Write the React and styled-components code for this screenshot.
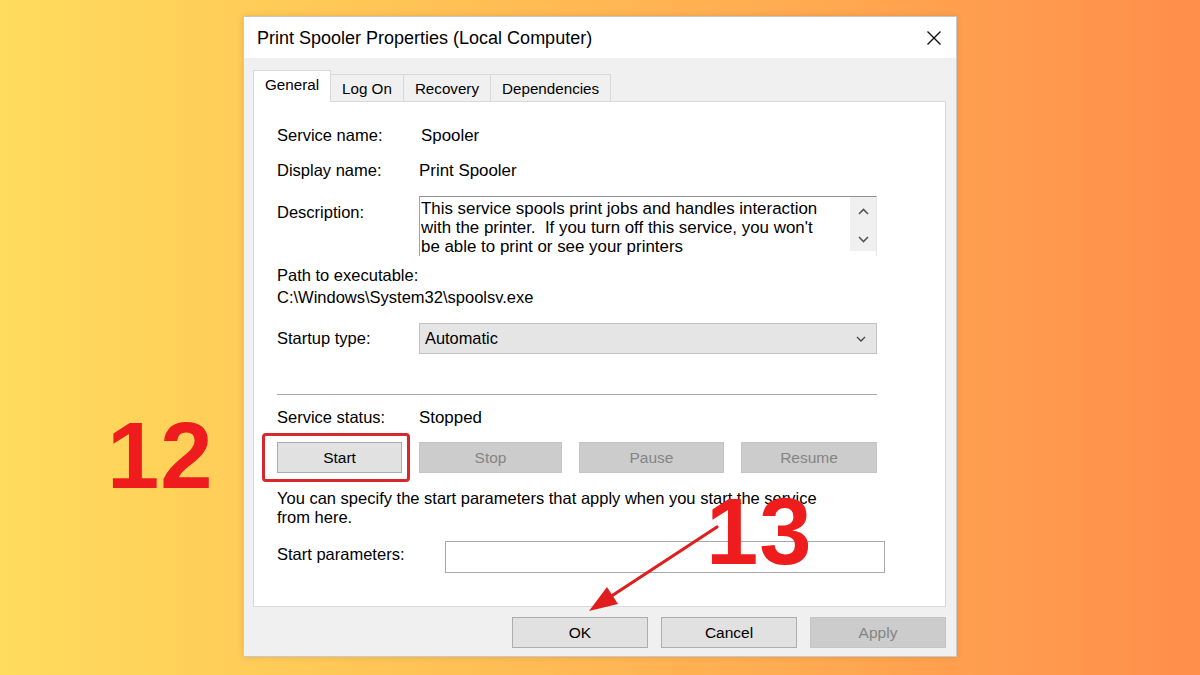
import React from 'react';
import styled, { createGlobalStyle, css } from 'styled-components';

const GlobalStyle = createGlobalStyle`
  html, body {
    margin: 0;
    padding: 0;
  }
  body {
    font-family: "Liberation Sans", Arial, sans-serif;
    color: #000;
  }
  * {
    box-sizing: border-box;
  }
`;

const Page = styled.div`
  position: relative;
  width: 1200px;
  height: 675px;
  overflow: hidden;
  padding-top: 16px;
  display: flex;
  justify-content: center;
  align-items: flex-start;
  background: linear-gradient(90deg, #ffdc5d 0%, #ffc656 30%, #ffae52 62%, #ff8e4b 100%);
`;

const Dialog = styled.div`
  width: 714px;
  height: 641px;
  display: flex;
  flex-direction: column;
  background: #f0f0f0;
  border: 1px solid #c9c9c9;
  box-shadow: 0 0 6px rgba(120, 70, 0, 0.18);
`;

const TitleBar = styled.div`
  height: 41px;
  flex: none;
  display: flex;
  align-items: center;
  justify-content: space-between;
  padding: 0 14px 0 13px;
  background: #fff;
`;

const Title = styled.span`
  font-size: 18px;
  padding-top: 2px;
`;

const Body = styled.div`
  flex: 1;
  display: flex;
  flex-direction: column;
  padding: 12px 10px 8px 9px;
`;

const TabStrip = styled.div`
  height: 31px;
  display: flex;
  align-items: flex-end;
`;

const Tab = styled.div`
  height: 27px;
  padding: 0 11px;
  display: flex;
  align-items: center;
  font-size: 15.2px;
  background: #f0f0f0;
  border: 1px solid #d9d9d9;
  border-bottom: none;
  margin-left: -1px;
  ${(p) =>
    p.$active &&
    css`
      position: relative;
      z-index: 1;
      height: 32px;
      margin: 0 0 -1px 0;
      padding: 0 11px 4px;
      background: #fff;
    `}
`;

const Panel = styled.div`
  height: 506px;
  display: flex;
  flex-direction: column;
  padding: 0 68px 0 23px;
  background: #fff;
  border: 1px solid #d9d9d9;
  font-size: 16.5px;
  line-height: 19px;
`;

const Field = styled.div`
  display: grid;
  grid-template-columns: 142px 1fr;
  align-items: ${(p) => p.$align || 'center'};
  margin-top: ${(p) => p.$mt}px;
`;

const Label = styled.span`
  white-space: nowrap;
  padding-top: ${(p) => p.$pt || 0}px;
`;

const Value = styled.span`
  white-space: nowrap;
  font-size: 16.9px;
  padding-left: ${(p) => p.$shift || 0}px;
`;

const DescBox = styled.div`
  height: 60px;
  display: flex;
  overflow: hidden;
  border-top: 1px solid #8f8f8f;
  border-left: 1px solid #a3a3a3;
  border-right: 1px solid #e6e6e6;
`;

const DescText = styled.div`
  flex: 1;
  padding: 2px 0 0 1px;
  font-size: 16.9px;
  white-space: pre;
`;

const ScrollTrack = styled.div`
  width: 26px;
  height: 54px;
  flex: none;
  display: flex;
  flex-direction: column;
  align-items: center;
  justify-content: space-between;
  padding: 11px 0 8px;
  background: #f0f0f0;
`;

const PathBlock = styled.div`
  margin-top: 8px;
  line-height: 22px;
  white-space: nowrap;
`;

const Select = styled.div`
  height: 31px;
  display: flex;
  align-items: center;
  justify-content: space-between;
  padding: 0 10px 0 5px;
  font-size: 16.4px;
  background: #e5e5e5;
  border: 1px solid #c2c2c2;
`;

const Separator = styled.div`
  margin-top: 40px;
  height: 2px;
  border-top: 1px solid #a9a9a9;
  border-bottom: 1px solid #fff;
`;

const ControlRow = styled.div`
  margin-top: 15px;
  display: grid;
  grid-template-columns: 125px 143px 145px 136px;
  justify-content: space-between;
`;

const Button = styled.div`
  width: ${(p) => (p.$w ? `${p.$w}px` : 'auto')};
  height: 31px;
  display: flex;
  align-items: center;
  justify-content: center;
  font-size: 15.5px;
  color: ${(p) => (p.$disabled ? '#858585' : '#000')};
  background: ${(p) => (p.$disabled ? '#cccccc' : '#e1e1e1')};
  border: 1px solid ${(p) => (p.$disabled ? '#c4c4c4' : '#adadad')};
`;

const Note = styled.div`
  margin-top: 16px;
  white-space: nowrap;
`;

const ParamInput = styled.input`
  width: 440px;
  height: 32px;
  margin-left: 26px;
  border: 1px solid #a9a9a9;
  background: #fff;
  font: inherit;
`;

const Footer = styled.div`
  margin-top: 10px;
  display: flex;
  justify-content: flex-end;
  gap: 13px;
`;

const StepNumber = styled.div`
  position: absolute;
  left: ${(p) => p.$x}px;
  top: ${(p) => p.$y}px;
  font-family: "Liberation Sans", Arial, sans-serif;
  font-weight: 700;
  font-size: 94px;
  line-height: 1;
  letter-spacing: 1px;
  color: #ee1c1c;
`;

const Highlight = styled.div`
  position: absolute;
  left: 262px;
  top: 433px;
  width: 148px;
  height: 49px;
  border: 3px solid #d7282e;
  border-radius: 4px;
`;

const Pointer = styled.svg`
  position: absolute;
  left: 580px;
  top: 520px;
  overflow: visible;
`;

const CloseIcon = () => (
  <svg width="16" height="16" viewBox="0 0 16 16">
    <path d="M1.5 1.5 L14.5 14.5 M14.5 1.5 L1.5 14.5" stroke="#111" strokeWidth="1.4" fill="none" />
  </svg>
);

const Chevron = ({ up }) => (
  <svg width="11" height="7" viewBox="0 0 11 7">
    <path
      d={up ? 'M1 6 L5.5 1.5 L10 6' : 'M1 1 L5.5 5.5 L10 1'}
      stroke="#555"
      strokeWidth="1.6"
      fill="none"
    />
  </svg>
);

const SelectArrow = () => (
  <svg width="10" height="6" viewBox="0 0 10 6">
    <path d="M1 1 L5 5 L9 1" stroke="#444" strokeWidth="1.3" fill="none" />
  </svg>
);

const App = () => {
  return (
    <Page>
      <GlobalStyle />
      <Dialog>
        <TitleBar>
          <Title>Print Spooler Properties (Local Computer)</Title>
          <CloseIcon />
        </TitleBar>
        <Body>
          <TabStrip>
            <Tab $active>General</Tab>
            <Tab>Log On</Tab>
            <Tab>Recovery</Tab>
            <Tab>Dependencies</Tab>
          </TabStrip>
          <Panel>
            <Field $mt={24}>
              <Label>Service name:</Label>
              <Value $shift={2}>Spooler</Value>
            </Field>
            <Field $mt={16}>
              <Label>Display name:</Label>
              <Value>Print Spooler</Value>
            </Field>
            <Field $mt={16} $align="start">
              <Label $pt={7}>Description:</Label>
              <DescBox>
                <DescText>
                  {'This service spools print jobs and handles interaction\nwith the printer.  If you turn off this service, you won\'t\nbe able to print or see your printers'}
                </DescText>
                <ScrollTrack>
                  <Chevron up />
                  <Chevron />
                </ScrollTrack>
              </DescBox>
            </Field>
            <PathBlock>
              Path to executable:
              <br />
              C:\Windows\System32\spoolsv.exe
            </PathBlock>
            <Field $mt={15}>
              <Label>Startup type:</Label>
              <Select>
                Automatic
                <SelectArrow />
              </Select>
            </Field>
            <Separator />
            <Field $mt={12}>
              <Label>Service status:</Label>
              <Value>Stopped</Value>
            </Field>
            <ControlRow>
              <Button>Start</Button>
              <Button $disabled>Stop</Button>
              <Button $disabled>Pause</Button>
              <Button $disabled>Resume</Button>
            </ControlRow>
            <Note>
              You can specify the start parameters that apply when you start the service
              <br />
              from here.
            </Note>
            <Field $mt={14} $align="start">
              <Label $pt={4}>Start parameters:</Label>
              <ParamInput readOnly />
            </Field>
          </Panel>
          <Footer>
            <Button $w={136}>OK</Button>
            <Button $w={136}>Cancel</Button>
            <Button $w={136} $disabled>Apply</Button>
          </Footer>
        </Body>
      </Dialog>

      <Highlight />
      <StepNumber $x={107} $y={409}>12</StepNumber>
      <StepNumber $x={706} $y={485}>13</StepNumber>
      <Pointer width="145" height="100" viewBox="0 0 145 100">
        <line x1="137" y1="7" x2="30" y2="77" stroke="#e01e1e" strokeWidth="3.2" strokeLinecap="round" />
        <polygon points="9,91 38,84 27,67" fill="#e01e1e" />
      </Pointer>
    </Page>
  );
};

export default App;
